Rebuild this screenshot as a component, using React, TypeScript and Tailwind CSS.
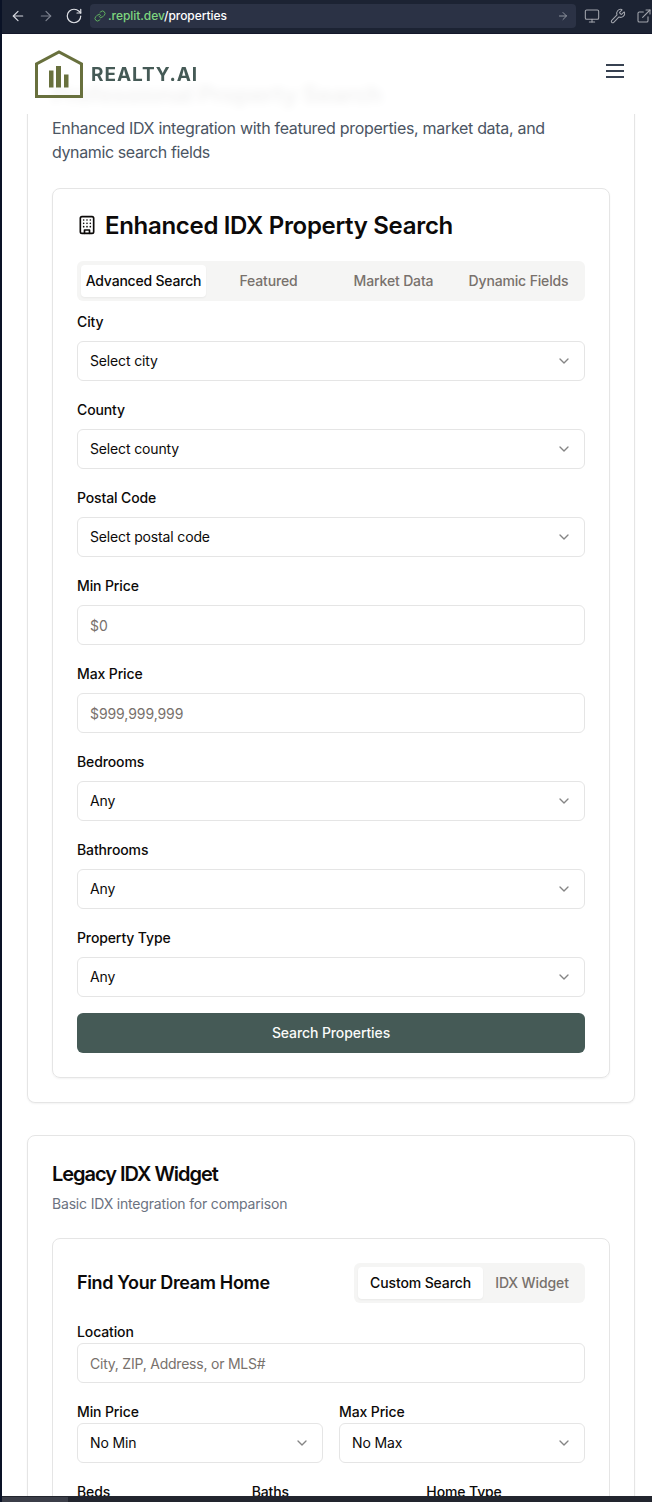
import React from "react";
import { ArrowLeft, ArrowRight, RotateCw, Link, Monitor, Wrench, ExternalLink, ChevronDown } from "lucide-react";

function Label({ children }: { children: React.ReactNode }) {
  return <div className="h-5 text-sm leading-5 font-medium tracking-[-0.12px] whitespace-nowrap text-[#0c0a09]">{children}</div>;
}

function Box({ text, placeholder, tight }: { text: string; placeholder?: boolean; tight?: boolean }) {
  return (
    <div className="flex h-10 items-center justify-between rounded-md border border-[#e5e5e5] bg-white pr-3 pl-3">
      {placeholder ? (
        <span className={`pt-0.5 text-sm leading-5 text-[#78716c] ${tight ? "tracking-[-0.22px]" : "tracking-[-0.08px]"}`}>{text}</span>
      ) : (
        <>
          <span className="text-sm leading-5 tracking-[-0.15px] text-[#0c0a09]">{text}</span>
          <ChevronDown className="size-4 text-[#858585]" strokeWidth={2} />
        </>
      )}
    </div>
  );
}

function Field({ label, text, placeholder }: { label: string; text: string; placeholder?: boolean }) {
  return (
    <div className="flex flex-col gap-[9px]">
      <Label>{label}</Label>
      <Box text={text} placeholder={placeholder} />
    </div>
  );
}

function BuildingIcon() {
  return (
    <svg className="size-5 shrink-0" viewBox="0 0 24 24" fill="none" stroke="#0c0a09" strokeWidth="2" strokeLinecap="round" strokeLinejoin="round">
      <rect x="4" y="2" width="16" height="20" rx="2" />
      <path d="M9 22v-4h6v4M8 6h.01M16 6h.01M12 6h.01M12 10h.01M12 14h.01M16 10h.01M16 14h.01M8 10h.01M8 14h.01" />
    </svg>
  );
}

function TopBar() {
  return (
    <div className="flex h-[34px] shrink-0 items-center overflow-hidden border-b border-[#14182a] bg-[#1c2333] pb-px pl-2">
      <ArrowLeft className="size-4 shrink-0 text-[#d5d8df]" strokeWidth={1.8} />
      <ArrowRight className="ml-3 size-4 shrink-0 text-[#7d828f]" strokeWidth={1.8} />
      <RotateCw className="ml-[11px] size-[18px] shrink-0 text-[#dfe1e6]" strokeWidth={1.6} />
      <div className="ml-[7px] flex h-6 w-[486px] shrink-0 items-center rounded bg-[#2b3245] pr-[7px] pl-1">
        <Link className="size-3 shrink-0 text-[#5fb05f]" strokeWidth={2} />
        <span className="ml-0.5 text-xs leading-4 font-medium tracking-[-0.06px] whitespace-nowrap text-white">
          <span className="text-[#7fd67f]">.replit.dev</span>/properties
        </span>
        <ArrowRight className="ml-auto size-3 shrink-0 text-[#9095a0]" strokeWidth={2} />
      </div>
      <Monitor className="ml-2 size-4 shrink-0 text-[#a2a5ad]" strokeWidth={1.6} />
      <Wrench className="ml-2.5 size-4 shrink-0 text-[#a2a5ad]" strokeWidth={1.6} />
      <ExternalLink className="ml-2.5 size-4 shrink-0 text-[#a2a5ad]" strokeWidth={1.6} />
    </div>
  );
}

function Header() {
  return (
    <header className="absolute inset-x-0 top-0 z-10 flex h-20 items-center bg-white/95 pr-7 pl-[33px] backdrop-blur-xs">
      <svg className="size-12 shrink-0" viewBox="0 0 48 48">
        <path d="M1.5 46.5V14L24 2L46.5 14V46.5Z" fill="none" stroke="#68703d" strokeWidth="3" />
        <path d="M14 20.5h4.5V37.5H14zM21 16h5V37.5H21zM29 24.5h4.5V37.5H29z" fill="#68703d" />
      </svg>
      <span className="ml-2 pt-0.5 text-[19px] leading-7 font-bold tracking-[0.95px] whitespace-nowrap text-[#455a56]">REALTY.AI</span>
      <div className="mb-[6px] ml-auto flex w-[18px] flex-col gap-1">
        <span className="h-0.5 bg-[#374151]" />
        <span className="h-0.5 bg-[#374151]" />
        <span className="h-0.5 bg-[#374151]" />
      </div>
    </header>
  );
}

export default function App() {
  return (
    <div className="flex h-[1502px] w-[652px] overflow-hidden bg-[#0a1020] font-['Inter','Liberation_Sans',sans-serif]">
      <div className="w-0.5 shrink-0 bg-[#0a1226]" />
      <div className="flex w-[650px] flex-col">
        <TopBar />
        <main className="relative min-h-0 flex-1 overflow-hidden bg-white pr-[17px] pl-[25px]">
          <Header />
          <section className="rounded-b-lg border-x border-b border-[#e5e5e5] px-6 pt-[45px] pb-6 shadow-xs">
            <h1 className="text-2xl leading-8 font-bold tracking-[-0.46px] whitespace-nowrap text-[#0c0a09]">Professional Property Search</h1>
            <p className="mt-[5px] text-base leading-6 tracking-[-0.31px] whitespace-nowrap text-[#4b5563]">
              Enhanced IDX integration with featured properties, market data, and
              <br />
              <span className="tracking-[-0.38px]">dynamic search fields</span>
            </p>
            <div className="mt-6 rounded-lg border border-[#e5e5e5] p-6 shadow-xs">
              <div className="flex h-6 items-center gap-2">
                <BuildingIcon />
                <h2 className="pt-0.5 text-2xl leading-6 font-semibold tracking-[-0.31px] whitespace-nowrap text-[#0c0a09]">Enhanced IDX Property Search</h2>
              </div>
              <div className="mt-6 grid h-10 grid-cols-4 rounded-md bg-[#f5f5f4] p-1 text-center text-sm leading-8 font-medium tracking-[-0.15px] whitespace-nowrap text-[#78716c]">
                <span className="flex justify-center rounded bg-white tracking-[-0.2px] text-[#0c0a09] shadow-xs">Advanced Search</span>
                <span>Featured</span>
                <span>Market Data</span>
                <span>Dynamic Fields</span>
              </div>
              <div className="mt-[11px] flex flex-col gap-[19px]">
                <Field label="City" text="Select city" />
                <Field label="County" text="Select county" />
                <Field label="Postal Code" text="Select postal code" />
                <Field label="Min Price" text="$0" placeholder />
                <Field label="Max Price" text="$999,999,999" placeholder />
                <Field label="Bedrooms" text="Any" />
                <Field label="Bathrooms" text="Any" />
                <Field label="Property Type" text="Any" />
              </div>
              <button className="mt-4 block h-10 w-full rounded-md bg-[#455a56] text-sm font-medium tracking-[-0.1px] text-[#fafaf9]">Search Properties</button>
            </div>
          </section>

          <section className="mt-8 rounded-lg border border-[#e5e5e5] p-6 shadow-xs">
            <h2 className="text-xl leading-7 font-semibold tracking-[-1.02px] whitespace-nowrap text-[#0c0a09]">Legacy IDX Widget</h2>
            <p className="mt-1.5 text-sm leading-5 tracking-[-0.18px] text-[#6b7280]">Basic IDX integration for comparison</p>
            <div className="mt-6 rounded-lg border border-[#e5e5e5] p-6">
              <div className="flex h-10 items-center justify-between">
                <h3 className="text-lg leading-7 font-semibold tracking-[-0.35px] whitespace-nowrap text-[#0c0a09]">Find Your Dream Home</h3>
                <div className="flex h-10 w-[231px] rounded-md bg-[#f5f5f4] p-1 text-sm leading-8 font-medium tracking-[-0.12px] whitespace-nowrap text-[#78716c]">
                  <span className="flex w-[125px] justify-center rounded bg-white text-[#0c0a09] shadow-xs">Custom Search</span>
                  <span className="flex flex-1 justify-center">IDX Widget</span>
                </div>
              </div>
              <div className="mt-[19px] flex flex-col gap-px">
                <Label>Location</Label>
                <Box text="City, ZIP, Address, or MLS#" placeholder tight />
              </div>
              <div className="mt-[19px] grid grid-cols-2 gap-4">
                <div className="flex flex-col gap-px">
                  <Label>Min Price</Label>
                  <Box text="No Min" />
                </div>
                <div className="flex flex-col gap-px">
                  <Label>Max Price</Label>
                  <Box text="No Max" />
                </div>
              </div>
              <div className="mt-[19px] grid grid-cols-3 gap-4">
                <div className="flex flex-col gap-px">
                  <Label>Beds</Label>
                  <Box text="Any" />
                </div>
                <div className="flex flex-col gap-px">
                  <Label>Baths</Label>
                  <Box text="Any" />
                </div>
                <div className="flex flex-col gap-px">
                  <Label>Home Type</Label>
                  <Box text="Any" />
                </div>
              </div>
            </div>
          </section>
        </main>
        <div className="flex h-1.5 shrink-0 bg-[#22252e]">
          <div className="mt-px w-[66px] bg-[#3b3e48]" />
        </div>
      </div>
    </div>
  );
}
